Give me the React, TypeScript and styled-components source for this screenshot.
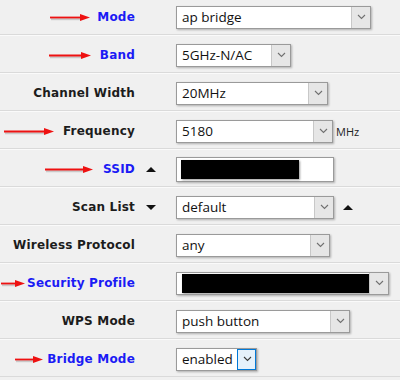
import React from "react";
import styled, { createGlobalStyle } from "styled-components";

const GlobalStyle = createGlobalStyle`
  html, body {
    margin: 0;
    padding: 0;
    background: #f0f0f0;
    overflow: hidden;
  }
`;

type Field = {
  label: string;
  marked?: boolean;
  arrow?: number;
  gap?: number;
  lead?: "up" | "down";
  kind: "select" | "input";
  value?: string;
  width: number;
  hidden?: number;
  unit?: string;
  after?: "up";
  focused?: boolean;
};

const fields: Field[] = [
  { label: "Mode", marked: true, arrow: 40, gap: 5, kind: "select", value: "ap bridge", width: 195 },
  { label: "Band", marked: true, arrow: 42, gap: 7, kind: "select", value: "5GHz-N/AC", width: 115 },
  { label: "Channel Width", kind: "select", value: "20MHz", width: 152 },
  { label: "Frequency", arrow: 50, gap: 7, kind: "select", value: "5180", width: 157, unit: "MHz" },
  { label: "SSID", marked: true, arrow: 48, gap: 8, lead: "up", kind: "input", width: 158, hidden: 118 },
  { label: "Scan List", lead: "down", kind: "select", value: "default", width: 158, after: "up" },
  { label: "Wireless Protocol", kind: "select", value: "any", width: 154 },
  { label: "Security Profile", marked: true, arrow: 24, gap: 0, kind: "select", width: 213, hidden: 188 },
  { label: "WPS Mode", kind: "select", value: "push button", width: 174 },
  { label: "Bridge Mode", marked: true, arrow: 28, gap: 2, kind: "select", value: "enabled", width: 81, focused: true },
];

export default function App() {
  return (
    <>
      <GlobalStyle />
      <Form>
        {fields.map((f) => (
          <Row key={f.label}>
            <Label $marked={f.marked}>
              {f.arrow && <Arrow length={f.arrow} gap={f.gap ?? 6} />}
              {f.label}
            </Label>
            <Lead>{f.lead && <Triangle $dir={f.lead} />}</Lead>
            <Control>
              {f.kind === "select" ? (
                <SelectBox $w={f.width} $focused={f.focused}>
                  <Value>{f.hidden ? <Redacted $w={f.hidden} /> : f.value}</Value>
                  <DropButton $focused={f.focused}>
                    <svg width="9" height="6" viewBox="0 0 9 6">
                      <path d="M1 1 L4.5 4.5 L8 1" fill="none" stroke={f.focused ? "#3a3a3a" : "#707070"} strokeWidth="1.1" />
                    </svg>
                  </DropButton>
                </SelectBox>
              ) : (
                <InputBox $w={f.width}>
                  <Redacted $w={f.hidden ?? 0} />
                </InputBox>
              )}
              {f.unit && <Unit>{f.unit}</Unit>}
              {f.after && <Triangle $dir="up" />}
            </Control>
          </Row>
        ))}
      </Form>
    </>
  );
}

function Arrow({ length, gap }: { length: number; gap: number }) {
  return (
    <ArrowMark width={length + 2} height="10" viewBox={`0 0 ${length + 2} 10`} style={{ marginRight: gap }}>
      <line x1="1" y1="6.2" x2={length - 8} y2="6.2" stroke="#b0b0b0" strokeWidth="2" opacity="0.6" />
      <line x1="0" y1="4.5" x2={length - 8} y2="4.5" stroke="#ee1111" strokeWidth="1.8" />
      <polygon points={`${length - 10},1 ${length},4.5 ${length - 10},8`} fill="#ee1111" />
    </ArrowMark>
  );
}

const Form = styled.div`
  margin-top: -3px;
  width: 400px;
`;

const Row = styled.div`
  display: grid;
  grid-template-columns: 135px 41px 1fr;
  align-items: center;
  box-sizing: border-box;
  height: 38px;
  padding-top: 3px;
  border-bottom: 1px solid #dadada;
  box-shadow: 0 1px 0 #fafafa;
`;

const Label = styled.div<{ $marked?: boolean }>`
  display: flex;
  align-items: center;
  justify-content: flex-end;
  font-family: "DejaVu Sans", Verdana, sans-serif;
  font-weight: bold;
  font-size: 12px;
  letter-spacing: 0.2px;
  color: ${(p) => (p.$marked ? "#1b1bf5" : "#1c1c1c")};
  white-space: nowrap;
`;

const ArrowMark = styled.svg`
  flex: none;
  margin-top: 2px;
`;

const Lead = styled.div`
  display: flex;
  justify-content: center;
  padding-right: 9px;
`;

const Triangle = styled.span<{ $dir: "up" | "down" }>`
  width: 0;
  height: 0;
  border-left: 5px solid transparent;
  border-right: 5px solid transparent;
  ${(p) => (p.$dir === "up" ? "border-bottom: 5px solid #111;" : "border-top: 5px solid #111;")}
`;

const Control = styled.div`
  display: flex;
  align-items: center;
  gap: 9px;
`;

const SelectBox = styled.div<{ $w: number; $focused?: boolean }>`
  display: flex;
  box-sizing: border-box;
  width: ${(p) => p.$w}px;
  height: 23px;
  background: #fff;
  border: 1px solid #9a9a9a;
  box-shadow: 1px 1px 2px rgba(0, 0, 0, 0.28);
`;

const Value = styled.div`
  flex: 1;
  display: flex;
  align-items: center;
  padding-left: 5px;
  font-family: "Open Sans", "Noto Sans", sans-serif;
  font-size: 13.5px;
  color: #111;
  overflow: hidden;
  white-space: nowrap;
`;

const DropButton = styled.div<{ $focused?: boolean }>`
  flex: none;
  width: 18px;
  display: flex;
  align-items: center;
  justify-content: center;
  background: ${(p) => (p.$focused ? "#e5f1fb" : "#e6e6e6")};
  border-left: 1px solid ${(p) => (p.$focused ? "#0078d7" : "#c8c8c8")};
  ${(p) => (p.$focused ? "outline: 1px solid #0078d7; outline-offset: -1px;" : "")}
`;

const InputBox = styled.div<{ $w: number }>`
  display: flex;
  align-items: center;
  box-sizing: border-box;
  width: ${(p) => p.$w}px;
  height: 25px;
  padding-left: 4px;
  background: #fff;
  border: 1px solid #9a9a9a;
  box-shadow: 1px 1px 2px rgba(0, 0, 0, 0.28);
`;

const Redacted = styled.div<{ $w: number }>`
  width: ${(p) => p.$w}px;
  height: 19px;
  background: #000;
  box-shadow: 1px 1px 2px rgba(0, 0, 0, 0.4);
`;

const Unit = styled.span`
  margin-left: -6px;
  font-family: "Open Sans", "Noto Sans", sans-serif;
  font-size: 11px;
  color: #222;
`;
